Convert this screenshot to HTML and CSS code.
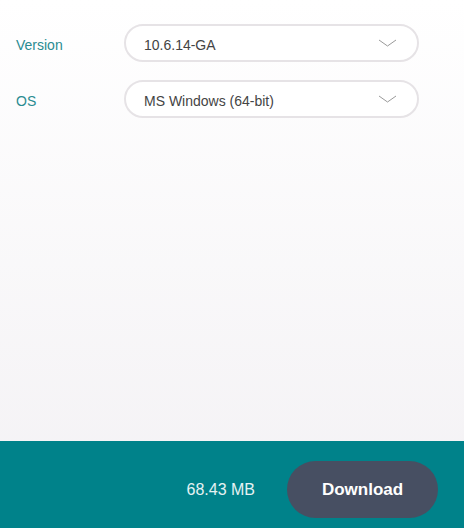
FILE: index.html
```html
<!DOCTYPE html>
<html>
<head>
<meta charset="utf-8">
<link rel="stylesheet" href="styles.css">
</head>
<body>
<div class="page">
  <main class="form">
    <div class="row">
      <label class="label">Version</label>
      <div class="select">
        <span class="value">10.6.14-GA</span>
        <svg class="chev" width="19" height="8" viewBox="0 0 19 8"><path d="M1 1 L9.5 7 L18 1" fill="none" stroke="#9a9a9a" stroke-width="1"/></svg>
      </div>
    </div>
    <div class="row">
      <label class="label">OS</label>
      <div class="select">
        <span class="value">MS Windows (64-bit)</span>
        <svg class="chev" width="19" height="8" viewBox="0 0 19 8"><path d="M1 1 L9.5 7 L18 1" fill="none" stroke="#9a9a9a" stroke-width="1"/></svg>
      </div>
    </div>
  </main>
  <footer class="footer">
    <span class="size">68.43 MB</span>
    <button class="download">Download</button>
  </footer>
</div>
</body>
</html>
```
FILE: styles.css
```css
html, body {
  margin: 0;
  padding: 0;
}
body {
  font-family: "Liberation Sans", Arial, sans-serif;
}
.page {
  height: 528px;
  display: flex;
  flex-direction: column;
  background: linear-gradient(to bottom, #ffffff 0%, #f3f1f4 100%);
}
.form {
  flex: 1;
  padding: 24px 45px 0 16px;
  display: flex;
  flex-direction: column;
  gap: 18px;
}
.row {
  display: flex;
  align-items: center;
}
.label {
  width: 108px;
  font-size: 14px;
  color: #2a8c91;
  padding-top: 4px;
}
.select {
  flex: 1;
  height: 38px;
  box-sizing: border-box;
  border: 2px solid #e6e3e6;
  border-radius: 19px;
  background: #ffffff;
  display: flex;
  align-items: center;
  justify-content: space-between;
  padding: 0 20px 0 18px;
}
.value {
  font-size: 14px;
  color: #444;
  padding-top: 4px;
}
.chev {
  display: block;
}
.footer {
  height: 87px;
  box-sizing: border-box;
  background: #00828a;
  display: flex;
  align-items: center;
  justify-content: flex-end;
  gap: 32px;
  padding: 10px 26px 0 0;
}
.size {
  font-size: 16px;
  color: #e6f2f3;
}
.download {
  width: 151px;
  height: 57px;
  border: none;
  border-radius: 29px;
  background: #474f62;
  color: #ffffff;
  font-family: "Liberation Sans", Arial, sans-serif;
  font-weight: bold;
  font-size: 17px;
}
```
